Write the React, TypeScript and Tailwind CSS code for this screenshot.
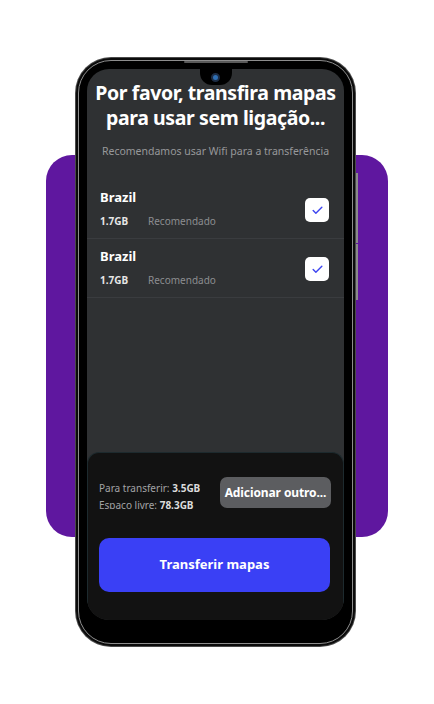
import { Check } from "lucide-react";

const maps = [
  { name: "Brazil", size: "1.7GB", tag: "Recomendado" },
  { name: "Brazil", size: "1.7GB", tag: "Recomendado" },
];

function MapRow({ name, size, tag }: { name: string; size: string; tag: string }) {
  return (
    <div className="flex h-[59px] items-start justify-between border-b border-[#3a3c3f] pl-[13px] pr-[15px]">
      <div className="pt-[8px]">
        <p className="text-[13px] font-bold leading-[18px] text-white">{name}</p>
        <p className="mt-[8px] flex text-[10px] leading-[14px]">
          <span className="w-[48px] font-bold text-[#e6e6e6]">{size}</span>
          <span className="text-[#8c8d90]">{tag}</span>
        </p>
      </div>
      <div className="mt-[18px] flex h-[24px] w-[24px] items-center justify-center rounded-[5px] bg-white">
        <Check className="h-[13px] w-[13px] text-[#3d45f0]" strokeWidth={2.6} />
      </div>
    </div>
  );
}

export default function App() {
  return (
    <div className="grid h-[704px] w-[434px] bg-white font-['Noto_Sans',sans-serif]">
      <div className="col-start-1 row-start-1 ml-[46px] mt-[155px] h-[382px] w-[342px] rounded-[26px] bg-[#5f179f]" />

      <div className="col-start-1 row-start-1 ml-[75px] mt-[57px] flex h-[590px] w-[283px]">
        <div className="h-full w-[281px] rounded-[36px] bg-[#4a4a4a] p-[1px]">
          <div className="h-full rounded-[35px] bg-[#0b0b0b] p-[2px]">
            <div className="flex h-full flex-col rounded-[33px] border border-[#8d8d8d] bg-black px-[8px] pb-[23px] pt-[8px]">
              {/* screen */}
              <div className="relative flex flex-1 flex-col overflow-hidden rounded-[22px] bg-[#2f3133]">
                <div className="absolute left-1/2 top-0 flex h-[16px] w-[32px] -translate-x-1/2 items-center justify-center rounded-b-[12px] bg-black">
                  <div className="h-[9px] w-[9px] rounded-full border-2 border-[#1c2c44] bg-[#2f6fb3]" />
                </div>

                <h1 className="mt-[11px] whitespace-nowrap text-center text-[19.5px] font-bold leading-[25px] tracking-[-0.4px] text-white">
                  Por favor, transfira mapas
                  <br />
                  para usar sem ligação...
                </h1>
                <p className="mt-[14px] text-center text-[10.5px] leading-[14px] text-[#97989a]">
                  Recomendamos usar Wifi para a transferência
                </p>

                <div className="mt-[22px]">
                  {maps.map((m, i) => (
                    <MapRow key={i} {...m} />
                  ))}
                </div>

                <div className="mt-auto h-[168px] rounded-t-[12px] border border-b-0 border-[#1d2a2e] bg-[#121212] pl-[11px] pr-[12px]">
                  <div className="mt-[24px] flex items-start justify-between">
                    <div className="h-[32px] overflow-hidden pt-[3px] text-[10px] leading-[17px] text-[#a2a3a5]">
                      <p>
                        Para transferir: <span className="font-bold text-[#dcdcdc]">3.5GB</span>
                      </p>
                      <p>
                        Espaço livre: <span className="font-bold text-[#dcdcdc]">78.3GB</span>
                      </p>
                    </div>
                    <button className="h-[31px] w-[111px] rounded-[7px] bg-[#5c5d60] text-[12px] font-bold tracking-[-0.1px] text-white">
                      Adicionar outro...
                    </button>
                  </div>
                  <button className="mt-[29px] h-[54px] w-[231px] rounded-[10px] bg-[#3a40f5] text-[13px] font-bold text-white">
                    Transferir mapas
                  </button>
                </div>
              </div>
            </div>
          </div>
        </div>
        <div className="mt-[116px] flex w-[2px] flex-col">
          <div className="h-[70px] w-[2px] bg-[#8a8a8a]" />
          <div className="mt-[1px] h-[56px] w-[2px] bg-[#8a8a8a]" />
        </div>
      </div>

      <div className="col-start-1 row-start-1 ml-[184px] mt-[61px] h-[2px] w-[64px] rounded-full bg-[#5a5a5a]" />
    </div>
  );
}
